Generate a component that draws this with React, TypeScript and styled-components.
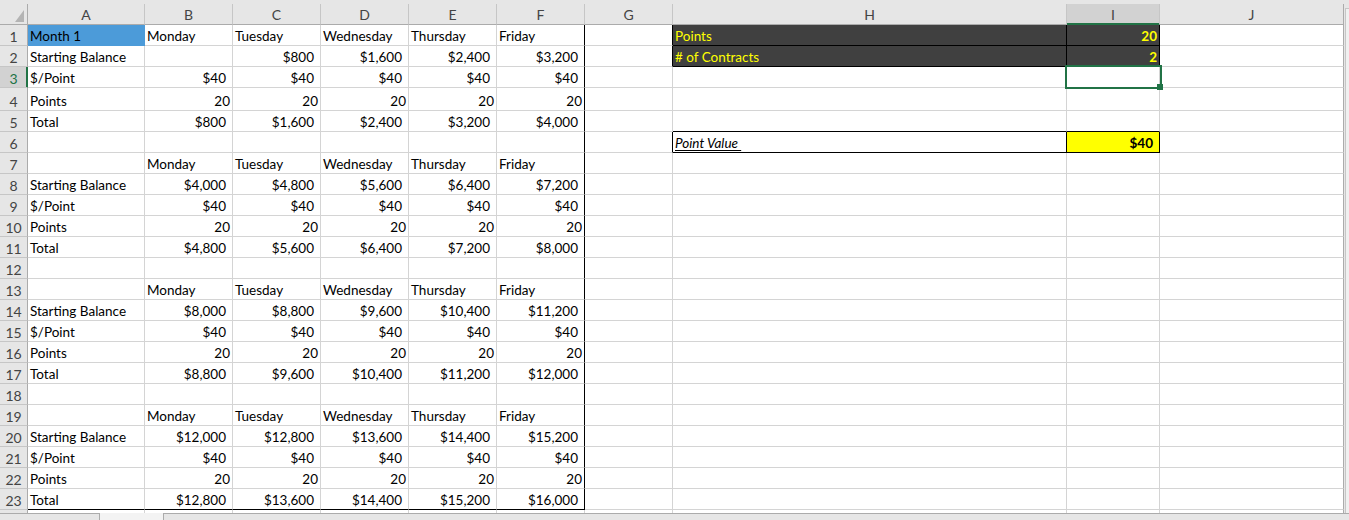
import React from "react";
import styled, { createGlobalStyle } from "styled-components";

const GREEN = "#217346";
const GRID = "#d4d4d4";
const DARK = "#404040";
const YELLOW = "#ffff00";
const BLACK = "#000";

const GlobalStyle = createGlobalStyle`
  html, body {
    margin: 0;
    padding: 0;
    background: #e6e6e6;
  }
  body {
    font-family: Lato, "Liberation Sans", sans-serif;
  }
`;

const Window = styled.div`
  width: 1349px;
  height: 520px;
  overflow: hidden;
  background: #e6e6e6;
  padding-top: 4px;
  box-sizing: border-box;
  display: flex;
  flex-direction: column;
`;

const Main = styled.div`
  display: flex;
  height: 509px;
  overflow: hidden;
  flex: none;
`;

const Sheet = styled.div`
  flex: none;
  display: grid;
  grid-template-columns: 28px 117px repeat(6, 88px) 394px 93px 184px;
  grid-template-rows: repeat(4, 21px) 23px repeat(20, 21px);
  background: #fff;
  font-size: 13.5px;
  line-height: 17px;
  color: #000;

  & > div {
    box-sizing: border-box;
  }
`;

const Corner = styled.div`
  background: #e6e6e6;
  border-right: 1px solid #ababab;
  border-bottom: 1px solid #ababab;

  svg {
    display: block;
  }
`;

const ColHead = styled.div<{ $active?: boolean; $last?: boolean }>`
  display: flex;
  align-items: center;
  justify-content: center;
  font-size: 14px;
  background: ${(p) => (p.$active ? "#d2d2d2" : "#e6e6e6")};
  border-right: 1px solid ${(p) => (p.$last ? "#ababab" : "#c6c6c6")};
  border-bottom: 1px solid ${(p) => (p.$active ? GREEN : "#ababab")};
  box-shadow: ${(p) => (p.$active ? `inset 0 -1px 0 ${GREEN}` : "none")};
  color: #444;
`;

const RowHead = styled.div<{ $active?: boolean }>`
  display: flex;
  align-items: flex-end;
  justify-content: center;
  font-size: 14px;
  background: ${(p) => (p.$active ? "#d2d2d2" : "#e6e6e6")};
  border-right: 1px solid ${(p) => (p.$active ? GREEN : "#ababab")};
  border-bottom: 1px solid #c6c6c6;
  box-shadow: ${(p) => (p.$active ? `inset -1px 0 0 ${GREEN}` : "none")};
  color: ${(p) => (p.$active ? GREEN : "#444")};
`;

type CellProps = {
  $right?: boolean;
  $cur?: boolean;
  $fill?: string;
  $ink?: string;
  $bold?: boolean;
  $rb?: string;
  $bb?: string;
};

const Cell = styled.div<CellProps>`
  position: relative;
  display: flex;
  align-items: flex-end;
  justify-content: ${(p) => (p.$right ? "flex-end" : "flex-start")};
  padding: 0 ${(p) => (p.$cur ? 6 : 2)}px 0 2px;
  white-space: nowrap;
  background: ${(p) => p.$fill ?? "#fff"};
  color: ${(p) => p.$ink ?? "#000"};
  font-weight: ${(p) => (p.$bold ? 700 : 400)};
  border-right: 1px solid ${(p) => p.$rb ?? p.$fill ?? GRID};
  border-bottom: 1px solid ${(p) => p.$bb ?? p.$fill ?? GRID};
`;

const Note = styled.span`
  font-style: italic;
  text-decoration: underline;
  text-underline-offset: 2px;
  white-space: pre;
`;

const SelectionFrame = styled.div`
  position: absolute;
  left: -2px;
  top: -2px;
  width: 97px;
  height: 24px;
  box-sizing: border-box;
  border: 2px solid ${GREEN};
  z-index: 2;
`;

const FillHandle = styled.div`
  position: absolute;
  right: -3px;
  bottom: -3px;
  width: 6px;
  height: 6px;
  background: ${GREEN};
`;

const VScroll = styled.div`
  flex: 1;
  margin: 4px 0 0 1px;
  border-top: 1px solid #c6c6c6;
  border-left: 1px solid #c6c6c6;
  background: #f0f0f0;
`;

const BottomBar = styled.div`
  display: flex;
  height: 7px;
  flex: none;
`;

const TabNav = styled.div`
  width: 100px;
  box-sizing: border-box;
  border-top: 1px solid #ababab;
  border-right: 1px solid #ababab;
  background: #e6e6e6;
`;

const TabGap = styled.div`
  width: 63px;
  background: #f3f3f3;
`;

const HScroll = styled.div`
  flex: 1;
  border-top: 1px solid #ababab;
  border-left: 1px solid #ababab;
  background: #e6e6e6;
`;

type Spec = {
  text?: string;
  right?: boolean;
  cur?: boolean;
  fill?: string;
  ink?: string;
  bold?: boolean;
  note?: boolean;
  rb?: string;
  bb?: string;
};

const COLS = ["A", "B", "C", "D", "E", "F", "G", "H", "I", "J"];
const DAYS = ["Monday", "Tuesday", "Wednesday", "Thursday", "Friday"];
const POINT_VALUE = 40;
const POINTS = 20;
const CONTRACTS = 2;
const ROW_COUNT = 24;
// last row only peeks out above the scroll bar
const NUMBERED_ROWS = 23;
const ACTIVE = { row: 2, col: "I" };

const money = (n: number) => "$" + n.toLocaleString("en-US");

const buildRows = () => {
  const rows: Record<string, Spec>[] = Array.from({ length: ROW_COUNT }, () => ({}));
  const set = (r: number, c: string, s: Spec) => {
    rows[r][c] = { ...rows[r][c], ...s };
  };

  // four weeks of compounding balances
  let balance = 0;
  for (let w = 0; w < 4; w++) {
    const top = w * 6;
    if (w === 0) set(top, "A", { text: "Month 1", fill: "#4c9bd9" });
    set(top + 1, "A", { text: "Starting Balance" });
    set(top + 2, "A", { text: "$/Point" });
    set(top + 3, "A", { text: "Points" });
    set(top + 4, "A", { text: "Total" });
    DAYS.forEach((day, d) => {
      const col = COLS[d + 1];
      const start = balance;
      balance = start + POINT_VALUE * POINTS;
      set(top, col, { text: day });
      set(top + 1, col, { text: start ? money(start) : "", right: true, cur: true });
      set(top + 2, col, { text: money(POINT_VALUE), right: true, cur: true });
      set(top + 3, col, { text: String(POINTS), right: true });
      set(top + 4, col, { text: money(balance), right: true, cur: true });
    });
  }
  for (let r = 0; r < 23; r++) set(r, "F", { rb: BLACK });
  COLS.slice(0, 6).forEach((c) => set(22, c, { bb: BLACK }));

  // inputs
  const input = { fill: DARK, ink: YELLOW, rb: BLACK, bb: BLACK };
  set(0, "G", { rb: BLACK });
  set(1, "G", { rb: BLACK });
  set(0, "H", { ...input, text: "Points" });
  set(0, "I", { ...input, text: String(POINTS), right: true, bold: true });
  set(1, "H", { ...input, text: "# of Contracts" });
  set(1, "I", { ...input, text: String(CONTRACTS), right: true, bold: true });

  // point value box
  set(4, "H", { bb: BLACK });
  set(4, "I", { bb: BLACK });
  set(5, "G", { rb: BLACK });
  set(5, "H", { text: "Point Value\u00a0", note: true, rb: BLACK, bb: BLACK });
  set(5, "I", {
    text: money(POINTS * CONTRACTS),
    right: true,
    cur: true,
    bold: true,
    fill: YELLOW,
    rb: BLACK,
    bb: BLACK,
  });

  for (let r = 0; r < ROW_COUNT; r++) set(r, "J", { rb: "#ababab" });
  return rows;
};

const rows = buildRows();

export default function App() {
  return (
    <>
      <GlobalStyle />
      <Window>
        <Main>
          <Sheet>
            <Corner>
              <svg width="27" height="20">
                <polygon points="15,18 24,18 24,6" fill="#b4b4b4" />
              </svg>
            </Corner>
            {COLS.map((c) => (
              <ColHead key={c} $active={c === ACTIVE.col} $last={c === "J"}>
                {c}
              </ColHead>
            ))}
            {rows.map((row, i) => (
              <React.Fragment key={i}>
                <RowHead $active={i === ACTIVE.row}>
                  {i < NUMBERED_ROWS ? i + 1 : null}
                </RowHead>
                {COLS.map((c) => {
                  const s = row[c] ?? {};
                  const selected = i === ACTIVE.row && c === ACTIVE.col;
                  return (
                    <Cell
                      key={c}
                      $right={s.right}
                      $cur={s.cur}
                      $fill={s.fill}
                      $ink={s.ink}
                      $bold={s.bold}
                      $rb={s.rb}
                      $bb={s.bb}
                    >
                      {s.note ? <Note>{s.text}</Note> : s.text}
                      {selected && (
                        <SelectionFrame>
                          <FillHandle />
                        </SelectionFrame>
                      )}
                    </Cell>
                  );
                })}
              </React.Fragment>
            ))}
          </Sheet>
          <VScroll />
        </Main>
        <BottomBar>
          <TabNav />
          <TabGap />
          <HScroll />
        </BottomBar>
      </Window>
    </>
  );
}
